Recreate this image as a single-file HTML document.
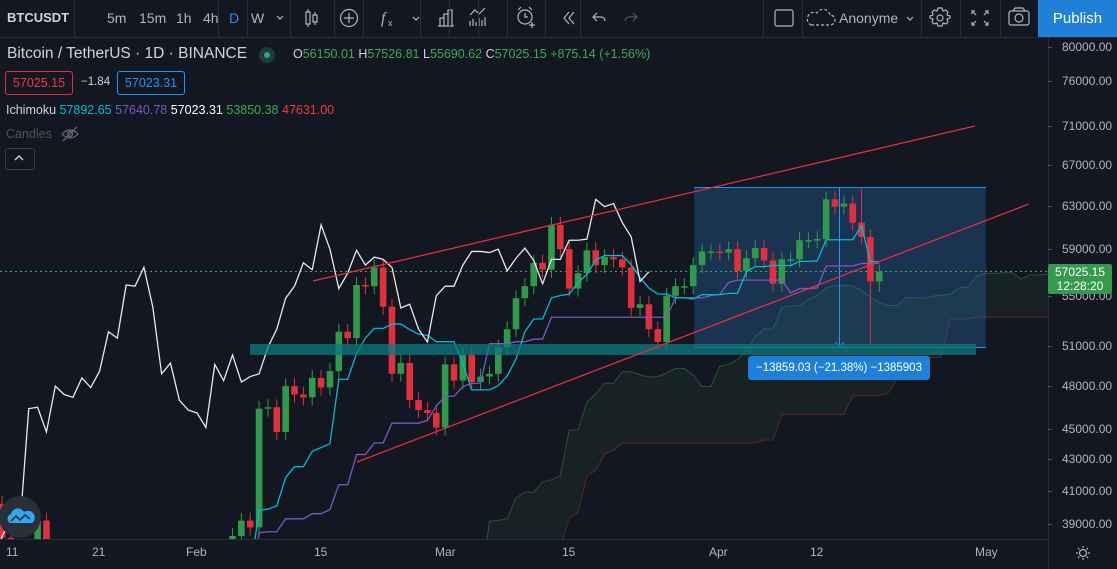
<!DOCTYPE html>
<html style="overflow:hidden"><head><meta charset="utf-8"><style>
html,body{margin:0;width:1117px;height:569px;overflow:hidden}
body{background:#131722;font-family:"Liberation Sans",sans-serif;position:relative;color:#d1d4dc}
.a{position:absolute;white-space:nowrap}
.tb{position:absolute;left:0;top:0;width:1117px;height:37px;border-bottom:1px solid #2a2e39;background:#131722}
.sep{position:absolute;top:0;width:1px;height:37px;background:#2a2e39}
.ti{position:absolute;top:10px;font-size:14px;color:#b2b5be}
.pl{position:absolute;left:1062px;font-size:12px;color:#b2b5be}
.tl{position:absolute;top:545px;font-size:12px;color:#b2b5be}
</style></head><body>
<svg id="s" class="a" style="left:0;top:0" width="1117" height="569"></svg>

<div class="tb">
<div class="a" style="left:7px;top:10px;font-size:13px;font-weight:bold;color:#d1d4dc">BTCUSDT</div>
<div class="sep" style="left:74px"></div>
<div class="ti" style="left:107px">5m</div><div class="ti" style="left:139px">15m</div><div class="ti" style="left:176px">1h</div><div class="ti" style="left:203px">4h</div><div class="ti" style="left:229px;color:#2196f3">D</div><div class="ti" style="left:251px">W</div>
<div class="sep" style="left:218px"></div>
<svg class="a" style="left:0;top:0" width="1117" height="37" fill="none" stroke="#b2b5be" stroke-width="1.2">
<path d="M206 15l3 3 3-3" transform="translate(71 1)"/>
<path d="M229 12h4v12h-4zM236 15h4v7h-4zM231 9v3M231 24v3M238 12v3M238 22v3" transform="translate(77 0)"/>
<circle cx="261" cy="18" r="8.5" transform="translate(88 0)"/><path d="M349 13v10M344 18h10"/>
<text x="381" y="23" fill="#b2b5be" stroke="none" font-size="16" font-style="italic" font-family="Liberation Serif">f</text><text x="388" y="26" fill="#b2b5be" stroke="none" font-size="9">x</text>
<path d="M413 17l3 3 3-3"/>
<path d="M440 26v-8h4v8M444 26v-12h4v12M448 26v-16h4v16M438 26h16"/>
<path d="M470 26v-5M473 26v-7M476 26v-4M479 26v-8M482 26v-6M485 26v-9M470 15l5-5 4 4 6-6"/>
<circle cx="525" cy="17" r="7"/><path d="M525 13v4h3M518 10l3-3M532 10l-3-3M529 25h6M532 22v6"/>
<path d="M569 12l-5 6 5 6M574 12l-5 6 5 6"/>
<path d="M597 13l-4 4 4 4M593 17h8a4 4 0 0 1 4 4" />
<path d="M633 13l4 4-4 4M637 17h-8a4 4 0 0 0-4 4" stroke="#50535e"/>
<rect x="775" y="10" width="18" height="16" rx="2"/>
<path d="M811 25h19a5 5 0 0 0 0-10 7 7 0 0 0-13-2 6 6 0 0 0-6 12z" stroke-dasharray="3 2"/>
<path d="M907 17l3 3 3-3"/>
<circle cx="940" cy="18" r="3"/><path d="M940 8l2 0 1 3 3-1 2 2-1 3 3 1v2l-3 1 1 3-2 2-3-1-1 3h-4l-1-3-3 1-2-2 1-3-3-1v-2l3-1-1-3 2-2 3 1 1-3z"/>
<path d="M972 14v-3h3M972 22v3h3M988 14v-3h-3M988 22v3h-3M973 12l3 3M987 12l-3 3M973 24l3-3M987 24l-3-3"/>
<rect x="1009" y="11" width="20" height="14" rx="2"/><circle cx="1019" cy="18" r="4"/><path d="M1013 11l2-3h8l2 3"/>
</svg>
<div class="sep" style="left:247px"></div><div class="sep" style="left:290px"></div><div class="sep" style="left:334px"></div><div class="sep" style="left:363px"></div><div class="sep" style="left:420px"></div><div class="sep" style="left:449px"></div><div class="sep" style="left:478px"></div><div class="sep" style="left:507px"></div><div class="sep" style="left:545px"></div><div class="sep" style="left:580px"></div>
<div class="sep" style="left:763px"></div><div class="sep" style="left:802px"></div><div class="sep" style="left:921px"></div><div class="sep" style="left:960px"></div><div class="sep" style="left:1000px"></div>
<div class="a" style="left:839px;top:10px;font-size:14px;color:#b2b5be">Anonyme</div>
<div class="a" style="left:1038px;top:0;width:79px;height:37px;background:#1e80d6;color:#fff;font-size:15px;line-height:37px;text-align:center">Publish</div>
</div>

<div class="a" style="left:7px;top:45px;font-size:15.5px;color:#d1d4dc">Bitcoin / TetherUS · 1D · BINANCE</div>
<div class="a" style="left:259px;top:47px;width:16px;height:16px;border-radius:8px;background:#1e3a3a"></div>
<div class="a" style="left:264px;top:52px;width:6px;height:6px;border-radius:3px;background:#26a69a"></div>
<div class="a" style="left:293px;top:47px;font-size:12.5px;color:#d1d4dc">O<span style="color:#3ea955">56150.01</span> H<span style="color:#3ea955">57526.81</span> L<span style="color:#3ea955">55690.62</span> C<span style="color:#3ea955">57025.15 +875.14 (+1.56%)</span></div>
<div class="a" style="left:5px;top:71px;width:66px;height:22px;border:1px solid #e0303e;border-radius:3px;color:#f23645;font-size:12.5px;line-height:22px;text-align:center">57025.15</div>
<div class="a" style="left:81px;top:76px;font-size:11.5px;color:#d1d4dc">−1.84</div>
<div class="a" style="left:117px;top:71px;width:66px;height:22px;border:1px solid #2196f3;border-radius:3px;color:#2196f3;font-size:12.5px;line-height:22px;text-align:center">57023.31</div>
<div class="a" style="left:6px;top:103px;font-size:12.5px;color:#d1d4dc">Ichimoku <span style="color:#00bcd4">57892.65</span> <span style="color:#7e57c2">57640.78</span> <span style="color:#fff">57023.31</span> <span style="color:#3ea955">53850.38</span> <span style="color:#f23645">47631.00</span></div>
<div class="a" style="left:6px;top:127px;font-size:12.5px;color:#50535e">Candles</div>
<svg class="a" style="left:60px;top:126px" width="20" height="16" fill="none" stroke="#6a6d78" stroke-width="1.2"><path d="M2 8q8-8 16 0q-8 8-16 0z"/><circle cx="10" cy="8" r="2.5"/><path d="M3 15l14-14"/></svg>
<div class="a" style="left:5px;top:148px;width:28px;height:20px;border:1px solid #363a45;border-radius:3px"></div>
<svg class="a" style="left:12px;top:152px" width="14" height="12" fill="none" stroke="#d1d4dc" stroke-width="1.4"><path d="M3 8l4-4 4 4"/></svg>

<div class="a" style="left:1048px;top:38px;width:1px;height:531px;background:#2a2e39"></div>
<div class="a" style="left:0;top:539px;width:1048px;height:1px;background:#2a2e39"></div>
<div id="pl"></div>
<div class="tl" style="left:6px">11</div><div class="tl" style="left:92px">21</div><div class="tl" style="left:186px">Feb</div><div class="tl" style="left:314px">15</div><div class="tl" style="left:435px">Mar</div><div class="tl" style="left:562px">15</div><div class="tl" style="left:709px">Apr</div><div class="tl" style="left:810px">12</div><div class="tl" style="left:975px">May</div>
<svg class="a" style="left:1075px;top:545px" width="16" height="16" fill="none" stroke="#b2b5be" stroke-width="1.2"><circle cx="8" cy="8" r="3.5"/><path d="M8 1v2M8 13v2M1 8h2M13 8h2M3 3l1.5 1.5M11.5 11.5L13 13M3 13l1.5-1.5M11.5 4.5L13 3"/></svg>

<div class="a" style="left:1048px;top:264px;width:64px;height:30px;background:#369a4e;border-radius:2px;color:#fff;font-size:12px;text-align:center;line-height:14px;padding-top:1px;box-sizing:border-box">57025.15<br>12:28:20</div>
<div class="a" style="left:748px;top:356px;width:182px;height:24px;background:#1e80d6;border-radius:3px;color:#fff;font-size:11.5px;line-height:24px;text-align:center">−13859.03 (−21.38%) −1385903</div>
<div class="a" style="left:-1px;top:496px;width:42px;height:42px;border-radius:21px;background:#2a2e39"></div>
<svg class="a" style="left:7px;top:506px" width="28" height="20"><path d="M3 17a5 5 0 0 1 1-9 7 7 0 0 1 13-2 6 6 0 0 1 8 11z" fill="#2ea8f0"/><path d="M4 15l5-5 4 4 5-5 5 4" fill="none" stroke="#2a2e39" stroke-width="1.6"/></svg>

<script>
var s=document.getElementById('s'),h='';
function Y(p){return 7542.3-663.9*Math.log(p*1000)}
function X(t){return 11+8.86*t}
var key=[[-57,16.0],[-48,19.1],[-46,17.1],[-42,19.7],[-32,18.3],[-26,21.3],[-22,23.5],[-15,26.3],[-11,29.0]];
var C=[],T0=-57;
for(var k=0;k<key.length-1;k++){var a=key[k],b=key[k+1];for(var t=a[0];t<b[0];t++)C.push(a[1]+(b[1]-a[1])*(t-a[0])/(b[0]-a[0]));}
C.push(29.0);
var rest=[29.4,32.2,33.0,32.0,34.0,36.8,39.4,40.6,40.2,38.2,35.6,34.0,37.4,39.2,36.8,36.2,35.8,36.6,36.0,35.5,30.8,33.0,32.1,32.3,32.4,32.5,30.4,33.4,34.3,34.3,33.1,
33.5,35.5,37.6,36.9,38.3,39.2,38.8,46.4,46.5,44.8,48.0,47.4,47.2,48.6,47.9,49.1,52.1,51.6,55.9,55.8,57.4,54.1,48.9,49.7,47.0,46.3,46.1,45.1,
49.6,48.4,50.3,48.3,48.7,48.9,50.9,52.3,54.8,55.8,57.8,57.2,61.2,59.0,55.6,56.9,58.9,57.6,58.3,58.1,57.4,54.0,54.3,52.3,51.3,55.0,55.8,55.8,57.6,58.8,58.8,
58.7,59.0,57.1,58.2,59.1,58.0,56.0,58.1,58.1,59.8,59.8,59.9,63.6,62.9,63.2,61.4,60.1,56.2,57.025];
C=C.concat(rest);
var N=C.length,O=[],H=[],L=[];
for(var i=0;i<N;i++){O[i]=i?C[i-1]:C[i];H[i]=Math.max(O[i],C[i])*1.012;L[i]=Math.min(O[i],C[i])*0.988;}
var last=N-1;L[last-1]=51.0;H[last-2]=64.8;L[last]=55.3;H[last]=57.6;
function tt(i){return i+T0}
function mid(i,n){var hi=-1,lo=1e9;for(var j=Math.max(0,i-n+1);j<=i;j++){hi=Math.max(hi,H[j]);lo=Math.min(lo,L[j]);}return (hi+lo)/2}
function poly(pts,col,w,op){return '<polyline points="'+pts.join(' ')+'" fill="none" stroke="'+col+'" stroke-width="'+w+'" opacity="'+(op||1)+'"/>'}
h+='<defs><clipPath id="c"><rect x="0" y="38" width="1048" height="501"/></clipPath></defs><g clip-path="url(#c)">';
var A=[],B=[];
for(var i=51;i<N;i++){var tn=mid(i,9),kj=mid(i,26);A.push([X(tt(i)+26),Y((tn+kj)/2)]);B.push([X(tt(i)+26),Y(mid(i,52))]);}
var fill=A.map(function(p){return p.join(',')}).concat(B.slice().reverse().map(function(p){return p.join(',')}));
h+='<polygon points="'+fill.join(' ')+'" fill="#1f3a2a" opacity="0.3"/>';
h+=poly(A.map(function(p){return p.join(',')}),'#2f6b3d',1,0.7);
h+=poly(B.map(function(p){return p.join(',')}),'#7d2a2e',1,0.7);
h+='<rect x="694" y="187" width="292" height="160" fill="#2a6fb0" opacity="0.32"/>';
h+='<line x1="694" y1="187.5" x2="986" y2="187.5" stroke="#2196f3"/><line x1="694" y1="347.5" x2="986" y2="347.5" stroke="#2196f3"/>';
h+='<line x1="839.5" y1="187" x2="839.5" y2="346" stroke="#2196f3"/><path d="M835 342l4.5 4 4.5-4" fill="none" stroke="#2196f3"/>';
h+='<line x1="0" y1="271.5" x2="1048" y2="271.5" stroke="#3ea955" stroke-dasharray="2 3"/>';
for(var i=0;i<N;i++){var t=tt(i);if(t<-1)continue;var x=X(t),up=C[i]>=O[i],col=up?'#2f9a4a':'#e0303e';
var y1=Y(Math.max(O[i],C[i])),y2=Y(Math.min(O[i],C[i]));if(y2-y1<1.5)y2=y1+1.5;
h+='<line x1="'+x+'" y1="'+Y(H[i])+'" x2="'+x+'" y2="'+Y(L[i])+'" stroke="'+col+'"/>';
h+='<rect x="'+(x-3.3)+'" y="'+y1+'" width="6.6" height="'+(y2-y1)+'" fill="'+col+'"/>';}
var tk=[],kj=[],lg=[];
for(var i=20;i<N;i++){tk.push(X(tt(i))+','+Y(mid(i,9)));kj.push(X(tt(i))+','+Y(mid(i,26)));}
for(var i=30;i<N;i++)lg.push(X(tt(i)-26)+','+Y(C[i]));
h+=poly(kj,'#7e57c2',1.3);h+=poly(tk,'#00bcd4',1.3);h+=poly(lg,'#e8e8e8',1.3);
h+='<rect x="250" y="344" width="726" height="11" fill="#0b7a7e" opacity="0.75"/>';
h+='<line x1="313" y1="281" x2="975" y2="126" stroke="#e0303e" stroke-width="1.3"/>';
h+='<line x1="357" y1="462" x2="1029" y2="204" stroke="#e0303e" stroke-width="1.3"/>';
h+='</g>';
s.innerHTML=h;
var lv=[80000,76000,71000,67000,63000,59000,55000,51000,48000,45000,43000,41000,39000],ph='';
lv.forEach(function(v){var y=Y(v/1000);ph+='<div class="pl" style="top:'+(y-7)+'px">'+v+'.00</div><div class="a" style="left:1048px;top:'+Math.round(y)+'px;width:4px;height:1px;background:#50535e"></div>';});
document.getElementById('pl').innerHTML=ph;
</script>
</body></html>
